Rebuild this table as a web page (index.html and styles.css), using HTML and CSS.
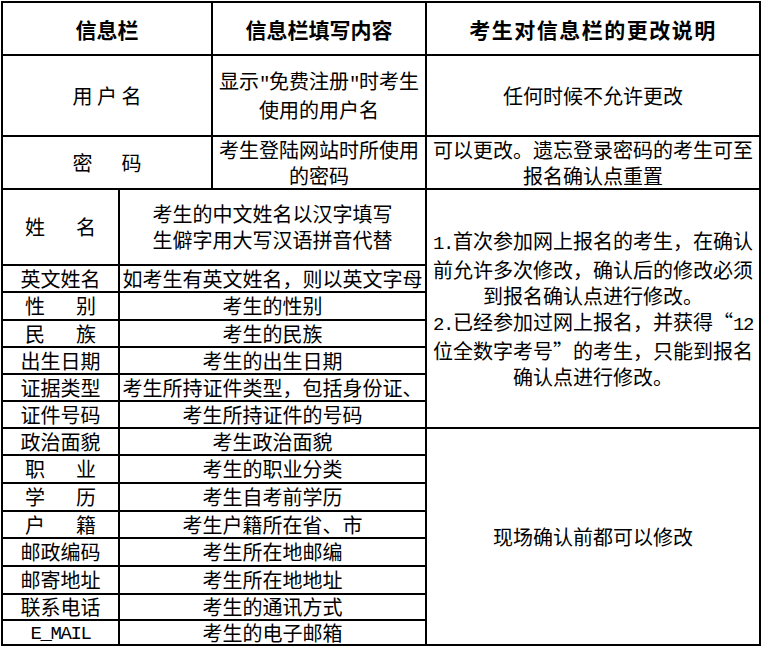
FILE: index.html
```html
<!DOCTYPE html>
<html lang="zh-CN">
<head>
<meta charset="utf-8">
<title>信息栏说明</title>
<link rel="stylesheet" href="styles.css">
</head>
<body>
<div class="sheet">
  <div class="cell head span-ab"><span class="t">信息栏</span></div>
  <div class="cell head"><span class="t">信息栏填写内容</span></div>
  <div class="cell head head-wide"><span class="t">考生对信息栏的更改说明</span></div>

  <div class="cell span-ab"><span class="t">用 户 名</span></div>
  <div class="cell"><span class="t">显示<span class="mono">"</span>免费注册<span class="mono">"</span>时考生<br>使用的用户名</span></div>
  <div class="cell"><span class="t">任何时候不允许更改</span></div>

  <div class="cell span-ab"><span class="t"><span class="gap-pw">密</span>码</span></div>
  <div class="cell"><span class="t">考生登陆网站时所使用<br>的密码</span></div>
  <div class="cell"><span class="t">可以更改。遗忘登录密码的考生可至<br>报名确认点重置</span></div>

  <div class="cell"><span class="t"><span class="gap">姓</span>名</span></div>
  <div class="cell span-bc"><span class="t">考生的中文姓名以汉字填写<br>生僻字用大写汉语拼音代替</span></div>
  <div class="cell note-a"><span class="t"><span class="mono">1.</span>首次参加网上报名的考生，在确认<br>前允许多次修改，确认后的修改必须<br>到报名确认点进行修改。<br><span class="mono">2.</span>已经参加过网上报名，并获得“<span class="mono">12</span><br>位全数字考号”的考生，只能到报名<br>确认点进行修改。</span></div>

  <div class="cell"><span class="t">英文姓名</span></div>
  <div class="cell span-bc"><span class="t">如考生有英文姓名，则以英文字母</span></div>
  <div class="cell"><span class="t"><span class="gap">性</span>别</span></div>
  <div class="cell span-bc"><span class="t">考生的性别</span></div>
  <div class="cell"><span class="t"><span class="gap">民</span>族</span></div>
  <div class="cell span-bc"><span class="t">考生的民族</span></div>
  <div class="cell"><span class="t">出生日期</span></div>
  <div class="cell span-bc"><span class="t">考生的出生日期</span></div>
  <div class="cell"><span class="t">证据类型</span></div>
  <div class="cell span-bc"><span class="t">考生所持证件类型，包括身份证、</span></div>
  <div class="cell"><span class="t">证件号码</span></div>
  <div class="cell span-bc"><span class="t">考生所持证件的号码</span></div>

  <div class="cell"><span class="t">政治面貌</span></div>
  <div class="cell span-bc"><span class="t">考生政治面貌</span></div>
  <div class="cell note-b"><span class="t">现场确认前都可以修改</span></div>
  <div class="cell"><span class="t"><span class="gap">职</span>业</span></div>
  <div class="cell span-bc"><span class="t">考生的职业分类</span></div>
  <div class="cell"><span class="t"><span class="gap">学</span>历</span></div>
  <div class="cell span-bc"><span class="t">考生自考前学历</span></div>
  <div class="cell"><span class="t"><span class="gap">户</span>籍</span></div>
  <div class="cell span-bc"><span class="t">考生户籍所在省、市</span></div>
  <div class="cell"><span class="t">邮政编码</span></div>
  <div class="cell span-bc"><span class="t">考生所在地邮编</span></div>
  <div class="cell"><span class="t">邮寄地址</span></div>
  <div class="cell span-bc"><span class="t">考生所在地地址</span></div>
  <div class="cell"><span class="t">联系电话</span></div>
  <div class="cell span-bc"><span class="t">考生的通讯方式</span></div>
  <div class="cell"><span class="t"><span class="mono">E_MAIL</span></span></div>
  <div class="cell span-bc"><span class="t">考生的电子邮箱</span></div>
</div>
</body>
</html>
```
FILE: styles.css
```css
html, body {
  margin: 0;
  padding: 0;
  background: #ffffff;
}

body {
  font-family: "Noto Sans CJK SC", "Noto Sans", sans-serif;
  font-size: 20px;
  color: #000000;
}

.sheet {
  display: grid;
  grid-template-columns: 115px 91px 212px 332px;
  grid-template-rows: 51px 79px 51px 74px 25px 26px 25px 25px 25px 25px 25px 26px 26px 25px 26px 26px 24px 23px;
  gap: 2px;
  padding: 2px;
  background: #000000;
  width: max-content;
  margin: 1px 0 0 1px;
}

.cell {
  background: #ffffff;
  display: flex;
  align-items: center;
  justify-content: center;
  text-align: center;
  white-space: nowrap;
  line-height: 26px;
}

.t {
  display: block;
}

.head {
  font-weight: 700;
  font-size: 21px;
}

.head-wide {
  letter-spacing: 1.5px;
}

.span-ab {
  grid-column: 1 / 3;
}

.span-bc {
  grid-column: 2 / 4;
}

.note-a {
  grid-column: 4;
  grid-row: 4 / 11;
}

.note-b {
  grid-column: 4;
  grid-row: 11 / 19;
}

.gap {
  margin-right: 31px;
}

.gap-pw {
  margin-right: 29px;
}

.mono {
  font-family: "Liberation Mono", monospace;
  font-size: 19px;
  letter-spacing: -1.4px;
}
```
